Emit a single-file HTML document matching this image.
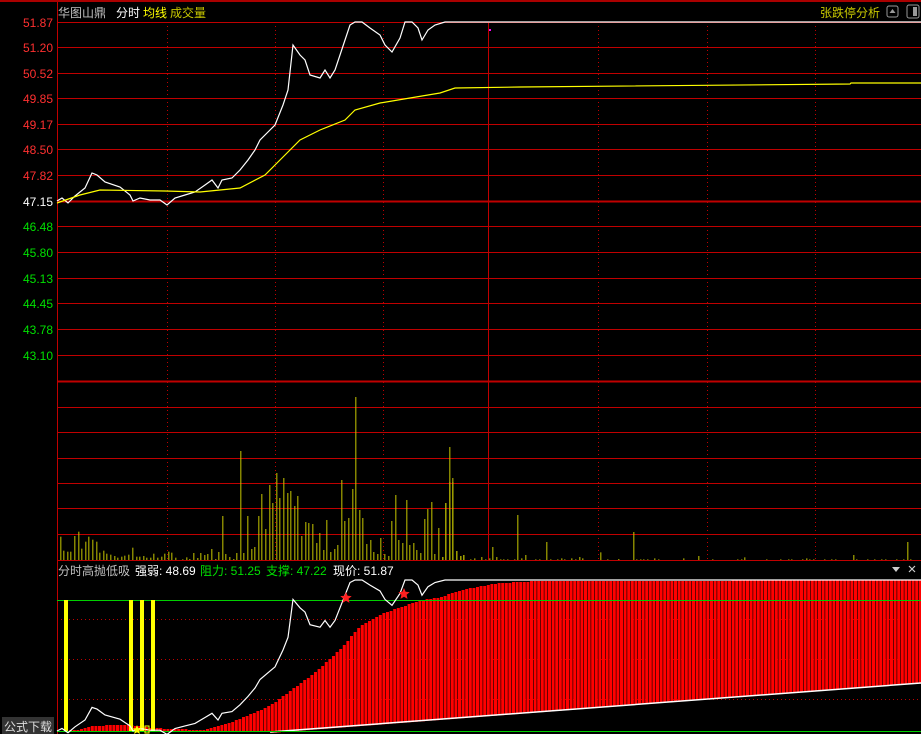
<!DOCTYPE html>
<html><head><meta charset="utf-8"><style>
html,body{margin:0;padding:0;background:#000;width:921px;height:734px;overflow:hidden}
svg{display:block}
text{font-family:"Liberation Sans","Noto Sans CJK SC",sans-serif}
</style></head><body>
<svg id="s" width="921" height="734" viewBox="0 0 921 734" xmlns="http://www.w3.org/2000/svg">
<rect width="921" height="734" fill="#000"/>
<g id="grid"></g>
<g id="vol"></g>
<g id="low"></g>
<g id="lines"></g>
<!-- header -->
<line x1="0" y1="1" x2="921" y2="1" stroke="#a00" stroke-width="2"/>
<text x="58" y="17" font-size="12" fill="#c0c0c0">华图山鼎</text>
<text x="116" y="17" font-size="12" fill="#fff">分时</text>
<text x="143" y="17" font-size="12" fill="#ffff00">均线</text>
<text x="170" y="17" font-size="12" fill="#c8c800">成交量</text>
<text x="820" y="17" font-size="12" fill="#c8c800">张跌停分析</text>
<rect x="887" y="6" width="11" height="11" rx="2" fill="none" stroke="#999"/>
<path d="M889.5 13 L892.5 9 L895.5 13 Z" fill="#999"/>
<rect x="907" y="5" width="12" height="13" rx="2" fill="none" stroke="#999"/>
<rect x="913" y="7" width="4" height="9" fill="#999"/>
<!-- lower header -->
<text x="58" y="575" font-size="12" fill="#c0c0c0">分时高抛低吸</text>
<text x="135" y="575" font-size="12" fill="#fff">强弱: 48.69</text>
<text x="200" y="575" font-size="12" fill="#00e000">阻力: 51.25</text>
<text x="266" y="575" font-size="12" fill="#00e000">支撑: 47.22</text>
<text x="333" y="575" font-size="12" fill="#fff">现价: 51.87</text>
<path d="M892 567 L900 567 L896 572 Z" fill="#ccc"/>
<path d="M909 566 L915 572 M915 566 L909 572" stroke="#ccc" stroke-width="1.2"/>
<rect x="2" y="717" width="52" height="17" fill="#333"/>
<text x="4" y="731" font-size="12" fill="#ddd">公式下载</text>
</svg>
<script>
var NS="http://www.w3.org/2000/svg";
function el(g,t,a){var e=document.createElementNS(NS,t);for(var k in a)e.setAttribute(k,a[k]);document.getElementById(g).appendChild(e);return e;}
var rows=[22,47,73,98,124,149,175,201,226,252,278,303,329,355,381,407,432,458,483,508,534,560];
rows.forEach(function(y){var w=(y==201||y==381)?2:1;el("grid","line",{x1:57,y1:y+.5,x2:921,y2:y+.5,stroke:"#c00000","stroke-width":w});});
[167,275,383,598,707,815].forEach(function(x){el("grid","line",{x1:x+.5,y1:22,x2:x+.5,y2:560,stroke:"#c00000","stroke-dasharray":"1,3"});});
el("grid","line",{x1:488.5,y1:22,x2:488.5,y2:560,stroke:"#c00000"});
el("grid","line",{x1:57.5,y1:0,x2:57.5,y2:734,stroke:"#c00000"});
[619,659,699].forEach(function(y){el("grid","line",{x1:57,y1:y+.5,x2:921,y2:y+.5,stroke:"#c00000","stroke-dasharray":"1,3"});});
var labs=[["51.87","#ff3030"],["51.20","#ff3030"],["50.52","#ff3030"],["49.85","#ff3030"],["49.17","#ff3030"],["48.50","#ff3030"],["47.82","#ff3030"],["47.15","#fff"],["46.48","#00e000"],["45.80","#00e000"],["45.13","#00e000"],["44.45","#00e000"],["43.78","#00e000"],["43.10","#00e000"]];
labs.forEach(function(l,i){var t=el("grid","text",{x:53,y:rows[i]+5,"font-size":12,fill:l[1],"text-anchor":"end"});t.textContent=l[0];});
var c="#c8c800";
function vb(x,t){el("vol","line",{x1:x,y1:560,x2:x,y2:t,stroke:c,"stroke-width":1});}
var a1=[[181,1070],[190,1112],[202,1115],[211,1115],[223,1068],[235,1055],[244,1106],[256,1085],[265,1070],[277,1079],[289,1085],[298,1118],[310,1112],[319,1121],[331,1124],[343,1128],[352,1133],[364,1130],[373,1127],[385,1124],[397,1103],[409,1130],[418,1130],[430,1128],[439,1133],[451,1133],[460,1121],[472,1133],[484,1130],[493,1121],[505,1115],[514,1118],[526,1133]];
a1.forEach(function(p){vb(p[0]/3+.5,180+p[1]/3);});
var a2=[[7,538],[19,532],[28,537],[40,519],[52,534],[61,519],[73,525],[82,522],[94,507],[106,537],[115,516],[127,408],[136,522],[148,531],[160,537],[169,519],[181,213],[190,519],[202,408],[214,507],[223,501],[235,408],[244,342],[256,447],[268,315],[277,369],[289,279],[298,354],[310,294],[322,339],[331,333],[343,378],[352,348],[364,468],[376,426],[385,429],[397,432],[409,489],[418,459],[430,510],[439,420],[451,516],[463,507],[472,495],[484,300],[493,423],[505,414],[517,327],[526,51],[538,390],[547,414],[559,492],[571,480],[580,516],[592,522],[601,474],[613,522],[625,528],[634,423],[646,345],[655,480],[667,489],[679,360],[688,495],[700,489],[709,510],[721,519],[733,417],[742,387],[754,366],[763,522],[775,444],[787,531],[796,369],[808,201],[817,294],[829,513],[841,528],[850,525]];
a2.forEach(function(p){vb(180+p[0]/3+.5,380+p[1]/3);});
var a3=[[7,171],[16,9],[28,-54],[37,-54],[49,153],[61,168],[70,165],[91,178],[103,175],[124,171],[136,178],[148,175],[157,141],[169,171],[181,178],[190,178],[202,178],[223,178],[232,45],[244,175],[256,165],[286,178],[298,178],[319,126],[331,178],[352,178],[364,175],[373,178],[394,175],[406,178],[418,171],[427,175],[481,157],[502,178],[535,177],[580,96],[589,178],[601,178],[610,178],[622,178],[643,175],[655,178],[730,175],[775,168],[817,178],[892,178],[904,178],[913,172],[979,178],[1021,178],[1045,178],[1054,178],[1087,178],[1099,175],[1108,178],[1120,178],[1153,178],[1174,178],[1186,178],[1240,165],[1249,178],[1282,178],[1303,178],[1324,178],[1336,178],[1369,178],[1390,178],[1402,126],[1411,178]];
a3.forEach(function(p){vb(440+p[0]/3+.5,500+p[1]/3);});
function interp(pts,x){for(var i=1;i<pts.length;i++){if(x<=pts[i][0]){var a=pts[i-1],b=pts[i];return a[1]+(b[1]-a[1])*(x-a[0])/(b[0]-a[0]);}}return pts[pts.length-1][1];}
var tp=[[58,731],[75,730],[90,726],[115,725],[130,725],[150,728],[200,730],[210,728],[230,722],[250,714],[270,705],[290,690],[300,683],[320,667],[340,648],[360,625],[380,614],[400,607],[420,600],[440,597],[460,590],[480,586],[500,583],[540,581],[921,580]];
for(var x=62;x<921;x+=3.6){var t=Math.round(interp(tp,x));var b=x<270?731:733-(x-270)*0.077;if(b-t>0.5)el("low","rect",{x:x.toFixed(1),y:t,width:3,height:(b-t).toFixed(1),fill:"#ff0000"});}
el("lines","polyline",{points:"270,732 921,683",fill:"none",stroke:"#fff","stroke-width":1.5});
el("lines","line",{x1:57,y1:600.5,x2:921,y2:600.5,stroke:"#00d000"});
el("lines","line",{x1:57,y1:731.5,x2:921,y2:731.5,stroke:"#00d000"});
[66,131,142,153].forEach(function(x){el("lines","rect",{x:x-2,y:600,width:4,height:131,fill:"#ffff00"});});
var wp=[[57,201],[62,198],[68,203],[75,196],[85,188],[92,173],[97,175],[105,182],[120,187],[130,195],[133,201],[140,198],[150,200],[160,200],[167,205],[175,198],[185,195],[195,192],[205,185],[212,180],[218,188],[222,180],[232,178],[240,170],[248,160],[255,150],[260,140],[270,130],[275,125],[283,105],[288,90],[293,45],[300,55],[305,60],[310,75],[320,78],[325,70],[330,78],[335,70],[340,55],[345,40],[350,25],[355,22],[362,22],[370,28],[380,35],[385,45],[392,52],[400,38],[405,22],[412,22],[418,28],[422,40],[428,30],[435,25],[445,22],[921,22]];
el("lines","polyline",{points:wp.map(function(p){return p.join(",");}).join(" "),fill:"none",stroke:"#fff","stroke-width":1.2});
el("lines","polyline",{points:wp.map(function(p){return p[0]+","+(580+(p[1]-22)*151/179).toFixed(1);}).join(" "),fill:"none",stroke:"#fff","stroke-width":1.2});
var yp=[[57,203],[80,195],[100,190],[165,191],[200,192],[240,188],[265,175],[285,155],[300,140],[320,130],[345,120],[355,110],[380,103],[410,98],[440,93],[455,88],[520,87],[850,84],[851,83],[921,83]];
el("lines","polyline",{points:yp.map(function(p){return p.join(",");}).join(" "),fill:"none",stroke:"#ffff00","stroke-width":1.2});
el("lines","rect",{x:489,y:29,width:2,height:2,fill:"#f0f"});
function star(cx,cy,r,f){var s="";for(var i=0;i<10;i++){var rr=i%2?r*0.45:r;var an=-Math.PI/2+i*Math.PI/5;s+=(cx+rr*Math.cos(an)).toFixed(1)+","+(cy+rr*Math.sin(an)).toFixed(1)+" ";}el("lines","polygon",{points:s,fill:f});}
star(346,598,6,"#ff2020");star(404,594,6,"#ff2020");star(137,730,5,"#ffff00");
el("lines","rect",{x:145,y:726,width:4,height:7,fill:"none",stroke:"#ffff00"});
</script>
</body></html>
